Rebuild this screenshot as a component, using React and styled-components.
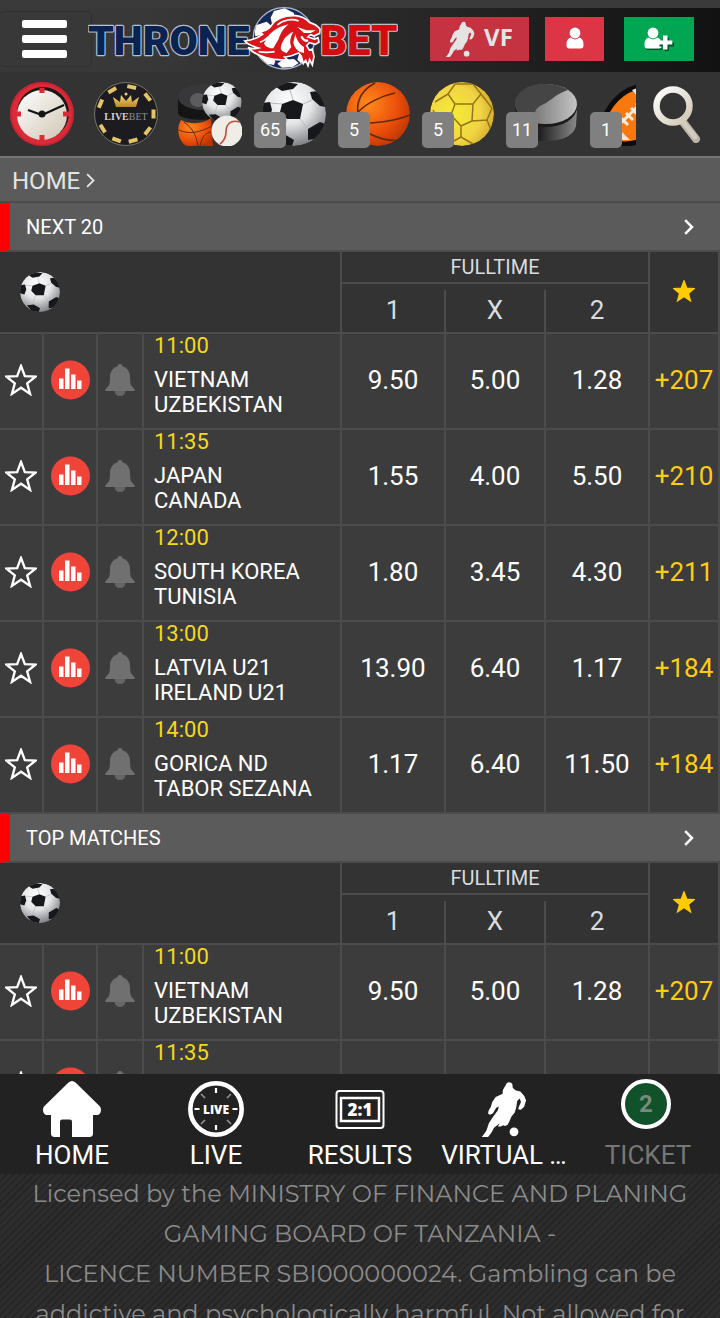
import React from "react";
import styled, { createGlobalStyle, css } from "styled-components";

const GlobalStyle = createGlobalStyle`
  *, *::before, *::after { box-sizing: border-box; }
  body {
    margin: 0;
    background: #333;
    color: #fff;
    font-family: Roboto, "Liberation Sans", sans-serif;
  }
  button { font: inherit; color: inherit; background: none; border: 0; padding: 0; cursor: pointer; }
  a { color: inherit; text-decoration: none; }
  svg { display: block; }
`;

const Page = styled.div`
  display: flex;
  flex-direction: column;
  height: 100vh;
  overflow: hidden;
`;

/* ---------- top bar ---------- */

const TopBar = styled.header`
  display: flex;
  align-items: center;
  height: 72px;
  flex: none;
  padding: 6px 26px 0 0;
  background:
    linear-gradient(#3a3a3a, #3a3a3a) top / 100% 8px no-repeat,
    linear-gradient(90deg, #383838 20%, #262626 60%, #121212 100%);
`;

const MenuButton = styled.button`
  display: flex;
  flex-direction: column;
  justify-content: center;
  gap: 7px;
  width: 92px;
  height: 56px;
  padding-left: 22px;
  margin-right: -4px;
  border: 1px solid #303030;
  border-left: 0;
  border-radius: 5px;
`;

const MenuBar = styled.span`
  width: 45px;
  height: 8px;
  border-radius: 2px;
  background: #fff;
`;

const LogoLink = styled.a`
  flex: none;
`;

const Actions = styled.div`
  display: flex;
  align-items: center;
  margin-left: auto;
`;

const ActionButton = styled.button`
  display: flex;
  align-items: center;
  justify-content: center;
  gap: 9px;
  width: ${(p) => p.$width}px;
  height: 44px;
  margin-left: ${(p) => p.$gap || 0}px;
  background: ${(p) => p.$color};
  color: #fff;
  opacity: ${(p) => (p.$dim ? 0.88 : 1)};
`;

const ActionLabel = styled.span`
  height: 36px;
  font-size: 24px;
  line-height: 32px;
  font-weight: 700;
  font-family: "Open Sans", "Noto Sans", sans-serif;
`;

/* ---------- sports strip ---------- */

const SportsBar = styled.nav`
  display: flex;
  flex: none;
  height: 84px;
  background: #333;
`;

const SportsList = styled.div`
  display: flex;
  flex: 1;
  min-width: 0;
  overflow: hidden;
`;

const SportLink = styled.a`
  position: relative;
  flex: none;
  width: 84px;
  height: 84px;
  padding: 10px;
`;

const Badge = styled.span`
  position: absolute;
  left: 2px;
  top: 40px;
  width: 32px;
  height: 36px;
  border-radius: 5px;
  background: #808080;
  font-size: 18px;
  line-height: 36px;
  text-align: center;
`;

const SearchButton = styled.button`
  flex: none;
  width: 84px;
  display: flex;
  align-items: center;
  justify-content: center;
`;

/* ---------- content ---------- */

const Content = styled.main`
  flex: 1;
  min-height: 0;
  overflow-y: auto;
  scrollbar-width: none;
  background: #3c3c3c;
`;

const Breadcrumb = styled.nav`
  display: flex;
  align-items: center;
  gap: 6px;
  height: 47px;
  padding: 2px 12px 0;
  border-top: 2px solid #747474;
  border-bottom: 2px solid #4c4c4c;
  background: #5b5b5b;
  color: #e4e4e4;
  font-size: 24px;
`;

const SectionHeader = styled.button`
  display: flex;
  align-items: center;
  justify-content: space-between;
  width: 100%;
  height: 49px;
  padding: 0 26px 0 16px;
  border-left: 10px solid #f00;
  border-bottom: 2px solid #4c4c4c;
  background: #5b5b5b;
`;

const SectionTitle = styled.span`
  font-size: 20px;
  line-height: 24px;
`;

const MatchTable = styled.table`
  width: 100%;
  table-layout: fixed;
  border-collapse: separate;
  border-spacing: 0;
`;

const line = css`
  border-right: 2px solid #4c4c4c;
  border-bottom: 2px solid #4c4c4c;
`;

const HeadCell = styled.th`
  ${line}
  padding: 0;
  background: #333;
  color: #d9dcdf;
  font-weight: 400;
  font-size: 20px;
  line-height: 24px;
  height: ${(p) => p.$height}px;
`;

const HeadIcon = styled.span`
  display: flex;
  justify-content: ${(p) => (p.$start ? "flex-start" : "center")};
  padding-left: ${(p) => (p.$start ? 20 : 0)}px;
  padding-bottom: ${(p) => (p.$start ? 0 : 2)}px;
`;

const OutcomeCell = styled.th`
  padding: 6px 0 0;
  height: 50px;
  background: #333;
  border-bottom: 2px solid #4c4c4c;
  border-right: ${(p) => (p.$last ? "2px solid #4c4c4c" : "0")};
  color: #d9dcdf;
  font-weight: 400;
`;

const OutcomeLabel = styled.span`
  display: block;
  height: 42px;
  border-right: ${(p) => (p.$last ? "0" : "2px solid #4c4c4c")};
  font-size: 26px;
  line-height: 40px;
`;

const Cell = styled.td`
  ${line}
  height: 96px;
  padding: 0;
  text-align: center;
`;

const TeamsCell = styled(Cell)`
  padding: 0 0 0 10px;
  text-align: left;
  vertical-align: top;
`;

const Kickoff = styled.div`
  margin-bottom: 9px;
  font-size: 22px;
  line-height: 24px;
  color: #f5d81c;
`;

const Team = styled.div`
  font-size: 22px;
  line-height: 25px;
  white-space: nowrap;
`;

const IconButton = styled.button`
  display: flex;
  align-items: center;
  justify-content: center;
  width: 100%;
  height: 94px;
  padding-bottom: 2px;
`;

const OddButton = styled.button`
  width: 100%;
  height: 94px;
  padding-bottom: 2px;
  font-size: 26px;
  color: ${(p) => (p.$more ? "#ffcc11" : "#fff")};
`;

/* ---------- bottom navigation ---------- */

const BottomNav = styled.nav`
  display: grid;
  grid-template-columns: repeat(5, 1fr);
  flex: none;
  height: 100px;
  background: #222;
`;

const NavLink = styled.a`
  display: flex;
  flex-direction: column;
  align-items: center;
  gap: 2px;
  padding-top: 7px;
  color: ${(p) => (p.$muted ? "#777" : "#fff")};
`;

const NavIcon = styled.span`
  display: flex;
  align-items: center;
  justify-content: center;
  height: 56px;
`;

const NavLabel = styled.span`
  font-size: 26px;
  line-height: 32px;
  white-space: nowrap;
`;

const TicketCount = styled.span`
  width: 50px;
  height: 50px;
  margin: 0 4px 10px 0;
  border: 4px solid #fff;
  border-radius: 50%;
  background: #11522b;
  color: #788a7f;
  font-size: 24px;
  font-weight: 700;
  line-height: 42px;
  text-align: center;
`;

const Footer = styled.footer`
  flex: none;
  height: 144px;
  overflow: hidden;
  background: repeating-linear-gradient(-45deg, #252525 0 2px, #2d2d2d 2px 5px);
  color: #8b8b8b;
  font-family: Montserrat, Inter, sans-serif;
  font-size: 24px;
  line-height: 40px;
  text-align: center;
`;

const FooterLine = styled.p`
  margin: 0;
  white-space: nowrap;
`;

/* ---------- drawings ---------- */

function Chevron({ size = 16, weight = 2.5 }) {
  return (
    <svg width={size * 0.625} height={size} viewBox="0 0 10 16" fill="none" stroke="currentColor" strokeWidth={weight} aria-hidden="true">
      <path d="M1.2 1.2 8 8l-6.800 6.800" />
    </svg>
  );
}

function Logo() {
  const word = {
    fontFamily: "Roboto, sans-serif",
    fontWeight: 900,
    stroke: "#b9bfcc",
    strokeWidth: 2.4,
    paintOrder: "stroke",
    strokeLinejoin: "bevel",
  };
  return (
    <svg width="310" height="64" viewBox="0 0 310 64" role="img" aria-label="Thronebet">
      <text x="0" y="48" fontSize="41" fill="#0a2350" {...word}>THRONE</text>
      <text x="232" y="48" fontSize="42" fill="#d40c10" {...word}>BET</text>
      <g transform="translate(152 -4) scale(.3333)">
        <circle cx="132" cy="106" r="92" fill="#14295a" stroke="#aeb9cf" strokeWidth="4" />
        <path d="M92 44l10-20 32-8 28 14 4 24-70 8z" fill="#fff" />
        <path d="M50 66l30-10 14 12-8 24-40 8-2-14z" fill="#fff" />
        <path d="M58 150l30 8 18 16-4 12-20-4-22-20z" fill="#fff" />
        <path d="M112 182l16-12 34-2 14 12-18 12-32 2z" fill="#fff" />
        <path d="M176 156l12 0 4 20-10 4-10-10z" fill="#fff" />
        <path
          d="M14 114C40 112 54 104 68 94L62 86C78 84 88 78 94 68C104 50 130 36 166 38C184 40 198 46 208 58C222 62 234 70 240 78L239 91L222 99L212 95L204 102L224 108L234 104L237 117L226 124L208 119L200 128L208 141L217 138L222 160L217 186L209 170L204 188L197 172L190 182L184 160L176 150C160 156 150 162 134 162L142 170C100 174 50 162 24 134C36 138 46 138 56 135C38 130 22 124 14 114Z"
          fill="#d8161c"
          stroke="#fff"
          strokeWidth="5"
        />
        <path
          d="M72 122C82 94 108 72 146 64C130 76 122 90 116 108L100 136C88 136 78 132 72 122ZM122 136C126 112 138 96 160 86C150 104 148 118 154 132L140 150C130 148 124 144 122 136ZM172 72L200 82L228 82L212 90L192 90ZM166 94C170 112 180 126 192 132L192 150C174 148 162 134 160 118Z"
          fill="#fff"
        />
        <path d="M112 66C130 50 156 46 176 54M60 118C72 114 78 108 84 102M56 146C76 150 92 148 104 146" stroke="#fff" strokeWidth="5" fill="none" />
        <path d="M184 100C190 112 196 116 204 112" stroke="#fff" strokeWidth="7" fill="none" />
      </g>
    </svg>
  );
}

function PlayerIcon({ width, height }) {
  return (
    <svg width={width} height={height} viewBox="18 10 142 176" fill="currentColor" aria-hidden="true">
      <path d="M96 17c5-5 15-4 18 4l1 10 8 8 16 4 13 15 5 13-6 20-10 9-9-1 3-10 6-13-4-11-8 8-3 20-5 17-10 12-6 14-6 12-8 4-6-3-8 4-9 0 6-10-18 14-8 15-12 16-8 6-17 0 13-16 8-12 8-24 12-18 16-22 3-12-8 4-11 18-9 4-6-4 2-9 7-12 4-14 11-17 14-6 8-4 1-12z" />
      <circle cx="119" cy="170" r="14" />
    </svg>
  );
}

function UserIcon({ plus }) {
  return (
    <svg width={plus ? 30 : 18} height="24" viewBox={plus ? "0 0 30 24" : "0 0 18 24"} fill="#fff" aria-hidden="true">
      {plus && <path d="M2 21.500h16.500v1.500H3z" fill="#06502a" />}
      <path d="M4.500 10.600a6.500 6.500 0 0 0 9 0c2.700.8 4 3.300 4 6.700v1.200c0 2-.9 3-2.800 3H3.300c-1.900 0-2.800-1-2.800-3v-1.200c0-3.400 1.300-5.900 4-6.700z" />
      <circle cx="9" cy="6" r="5.400" />
      {plus && (
        <>
          <path d="M20.500 10.500h4.500v5h5v4h-5v5h-4.500v-5h-5v-4h5z" fill="#06502a" />
          <path d="M19 8.500h4.500v5h4.800v4h-4.800v5H19v-5h-4.800v-4H19z" />
        </>
      )}
    </svg>
  );
}

const HiddenDefs = styled.svg`
  position: absolute;
  width: 0;
  height: 0;
`;

function BallShading() {
  return (
    <HiddenDefs aria-hidden="true">
      <defs>
        <radialGradient id="whiteBall" cx=".42" cy=".3" r=".72">
          <stop offset="0" stopColor="#fff" />
          <stop offset=".5" stopColor="#e4e5e7" />
          <stop offset="1" stopColor="#7c7e82" />
        </radialGradient>
        <radialGradient id="orangeBall" cx=".35" cy=".35" r=".75">
          <stop offset="0" stopColor="#ff8a1c" />
          <stop offset=".6" stopColor="#ec500b" />
          <stop offset="1" stopColor="#b93202" />
        </radialGradient>
        <radialGradient id="yellowBall" cx=".35" cy=".5" r=".75">
          <stop offset="0" stopColor="#f7ec35" />
          <stop offset=".6" stopColor="#f0d445" />
          <stop offset="1" stopColor="#c99a24" />
        </radialGradient>
        <linearGradient id="puckTop" x1="0" x2="1">
          <stop offset="0" stopColor="#555" />
          <stop offset=".5" stopColor="#8f8f8f" />
          <stop offset="1" stopColor="#c4c4c4" />
        </linearGradient>
        <linearGradient id="puckSide" x1="0" x2="1">
          <stop offset="0" stopColor="#111" />
          <stop offset=".4" stopColor="#222" />
          <stop offset="1" stopColor="#8a8a8a" />
        </linearGradient>
        <linearGradient id="cream" x1="0" y1="0" x2="1" y2="1">
          <stop offset="0" stopColor="#fff" />
          <stop offset="1" stopColor="#cfc6b4" />
        </linearGradient>
        <linearGradient id="gold" x1="0" y1="0" x2="0" y2="1">
          <stop offset="0" stopColor="#f7dc82" />
          <stop offset="1" stopColor="#b98420" />
        </linearGradient>
        <clipPath id="ballEdge"><circle cx="32" cy="32" r="32" /></clipPath>
      </defs>
    </HiddenDefs>
  );
}

const SoccerArt = () => (
  <g clipPath="url(#ballEdge)">
    <circle cx="32" cy="32" r="32" fill="url(#whiteBall)" />
    <path
      d="M20 22 8 21M31 18l-3-10M41 22l9-4M38 37l9 11M25 37l-5 15"
      fill="none"
      stroke="#b7b9bd"
      strokeWidth="1"
    />
    <g fill="#17181b">
      <path d="M20 22l11-4 10 4-3 15H25l-7-7z" />
      <path d="M14 5l9-5 13 2-5 5-11 2z" />
      <path d="M48 10l8-1 6 8 2 8-6-1-8-7z" />
      <path d="M0 21l8-1 2 8-3 8-7-2z" />
      <path d="M46 47l12-7 5 2-5 14-12 2z" />
      <path d="M11 53l11-1 10 6-2 6-10-1z" />
    </g>
  </g>
);

const BasketArt = () => (
  <g clipPath="url(#ballEdge)">
    <circle cx="32" cy="32" r="32" fill="url(#orangeBall)" />
    <g fill="none" stroke="#5f2a0b" strokeWidth="1.600">
      <path d="M0 38c10 5 42 4 64-5M12 30C20 22 34 14 49 11M12 32C10 18 16 8 29 1M20 50c12 6 22 10 36 8M4 44c6 4 10 4 16 7" />
    </g>
  </g>
);

const HandballArt = () => (
  <g clipPath="url(#ballEdge)">
    <circle cx="32" cy="32" r="32" fill="url(#yellowBall)" />
    <g fill="none" stroke="#957612" strokeWidth="1.500">
      <path d="M18 12l7-10h18l8 10-8 10H25zM25 22l-4 11 10 11 11-5 1-17M18 12 5 20M51 12l11 14-5 12-15 1M57 38l4 10-7 10M21 33 8 37 3 28M8 37l4 14 12 8 7-4V44M31 55l12 7M12 51l-5 1" />
    </g>
  </g>
);

const PuckArt = () => (
  <g>
    <path d="M2 26v19c3 9 16 14 30 14 17 0 28-6 30-15l1-16z" fill="url(#puckSide)" />
    <ellipse cx="32" cy="25" rx="31" ry="20" fill="#1b1b1b" />
    <ellipse cx="32" cy="22" rx="31" ry="20" fill="url(#puckTop)" />
    <path d="M1 22C2 10 14 2 32 2c9 0 18 3 22 6-14 5-16 10-24 14-10 4-10 10-11 17C8 36 1 29 1 22z" fill="#454545" />
  </g>
);

const RugbyArt = () => (
  <g>
    <path d="M4 54C2 34 18 8 44 4c20 2 24 30 10 46-12 14-36 16-50 4z" fill="#f8780f" stroke="#0c0c0c" strokeWidth="5" />
    <path d="M34 8l10-4 8 12-8 4zM22 48l10 10-16 0z" fill="#e9e4dd" />
    <path d="M22 42 44 20M23 36l7 7M28 31l7 7M33 26l7 7M38 21l7 7" stroke="#f6eadb" strokeWidth="3" fill="none" />
  </g>
);

const ClockArt = () => (
  <g>
    <circle cx="32" cy="32" r="32" fill="#dc2a38" />
    <circle cx="32" cy="32" r="31" fill="none" stroke="#b91d2b" strokeWidth="2" opacity=".5" />
    <circle cx="33" cy="31" r="26" fill="#1d1617" />
    <circle cx="32" cy="33" r="25" fill="url(#cream)" />
    <path d="M32 6v5M32 53v6M6 32h5M53 32h6" stroke="#dc2a38" strokeWidth="5" />
    <path d="M18 28l14 5 22-10" fill="none" stroke="#151515" strokeWidth="2.200" />
    <circle cx="32" cy="32" r="3.500" fill="#151515" />
  </g>
);

const ChipArt = () => (
  <g>
    <circle cx="32" cy="32" r="31.500" fill="#1c1b1f" stroke="#77736a" strokeWidth="1" />
    {[12, 52, 90, 128, 165, 200, 238, 292, 330].map((a) => (
      <rect key={a} x="27.500" y="2.500" width="9" height="4" fill="#e4c566" transform={`rotate(${a} 32 32)`} />
    ))}
    <path d="M22 25 19 15l7 5 1-7 5 6 5-6 1 7 7-5-3 10z" fill="url(#gold)" />
    <circle cx="32" cy="12" r="1.500" fill="#f0cf6d" />
    <text x="32" y="38" textAnchor="middle" fontFamily="'Liberation Serif', serif" fontSize="10" fill="#d2d2d4">
      <tspan fontWeight="700">LIVE</tspan><tspan fill="#8d8d90">BET</tspan>
    </text>
  </g>
);

const AllSportsArt = () => (
  <g>
    <path d="M0 14v17c2 9 44 9 50 0V14z" fill="#141414" />
    <ellipse cx="25" cy="15" rx="25" ry="13" fill="#38383a" />
    <ellipse cx="20" cy="18" rx="8" ry="7" fill="#5c5c5e" />
    <path d="M3 38c10 5 22 4 30-2l2 28H9C0 60-2 46 3 38z" fill="url(#orangeBall)" />
    <path d="M1 48c10 5 22 2 33-4M6 40c8 6 12 12 14 24M34 50c-6 0-10 4-12 14" fill="none" stroke="#6a2c0b" />
    <g transform="translate(24 0) scale(.62)"><SoccerArt /></g>
    <circle cx="49" cy="49" r="15.500" fill="#f0ece6" />
    <path d="M62 40c-10-3-14 3-14 10 0 6-2 9-6 12" fill="none" stroke="#c44a40" strokeWidth="1.600" />
  </g>
);

const ART = {
  clock: ClockArt,
  chip: ChipArt,
  all: AllSportsArt,
  soccer: SoccerArt,
  basket: BasketArt,
  handball: HandballArt,
  puck: PuckArt,
  rugby: RugbyArt,
};

function SportIcon({ kind, size = 64 }) {
  const Art = ART[kind];
  return (
    <svg width={size} height={size} viewBox="0 0 64 64" aria-hidden="true">
      <Art />
    </svg>
  );
}

const SearchIcon = () => (
  <svg width="52" height="58" viewBox="0 0 52 58" fill="none" aria-hidden="true">
    <path d="M31 37l13 17" stroke="#b8b1a4" strokeWidth="8" strokeLinecap="round" />
    <path d="M31 37l12 15" stroke="#d3ccc0" strokeWidth="5" strokeLinecap="round" />
    <circle cx="21" cy="21" r="16.500" stroke="url(#cream)" strokeWidth="6.500" />
  </svg>
);

const STAR = "15 1.800 18.600 11.400 28.600 11.800 20.800 18.100 23.500 28 15 22.300 6.500 28 9.200 18.100 1.400 11.800 11.400 11.400";

const Star = ({ size, filled }) => (
  <svg width={size} height={size} viewBox="0 0 30 30" aria-hidden="true">
    <polygon points={STAR} fill={filled ? "#ffcc00" : "none"} stroke={filled ? "#ffcc00" : "#fff"} strokeWidth="2.200" />
  </svg>
);

const StatsIcon = () => (
  <svg width="40" height="40" viewBox="0 0 40 40" aria-hidden="true">
    <circle cx="20.500" cy="20" r="19.500" fill="#f04438" />
    <path d="M9 18.500h4.500V29H9zM15 8.500h4.500V29H15zM21 14.500h4.500V29H21zM27 20.500h4.500V29H27z" fill="#fff" />
  </svg>
);

const BellIcon = () => (
  <svg width="30" height="34" viewBox="0 0 30 34" fill="#707070" aria-hidden="true">
    <path d="M15 1c1.500 0 2.300.8 2.500 2.200C23 5 25 9.500 25 14c0 6 .6 9 4.500 12v2H.5v-2C4.400 23 5 20 5 14c0-4.500 2-9 7.500-10.800C12.700 1.800 13.500 1 15 1z" />
    <path d="M9.500 28h11c-.5 3.300-2.500 5-5.500 5s-5-1.700-5.500-5z" fill="#666" />
  </svg>
);

const HomeIcon = () => (
  <svg width="58" height="56" viewBox="0 0 58 56" fill="#fff" aria-hidden="true">
    <path d="M25.500 1.500c2.200-2 4.800-2 7 0L56.500 25c2.800 3 1.500 9-3 9H50v18.500c0 2.300-1 3.500-3.500 3.500H29V41c0-1.700-.7-2.500-2.500-2.500h-7c-1.600 0-2.500.8-2.500 2.500v15h-5.500C9.200 56 8 54.800 8 52.500V34H4.500c-4.500 0-5.800-6-3-9z" />
  </svg>
);

const LiveIcon = () => (
  <svg width="56" height="56" viewBox="0 0 56 56" aria-hidden="true">
    <circle cx="28" cy="28" r="25.700" fill="none" stroke="#fff" strokeWidth="4.600" />
    <path d="M28 7v5M28 44v5M6.500 28h5M44.500 28h5" stroke="#fff" strokeWidth="2.200" />
    <path d="M13 13l4 4M43 13l-4 4M13 43l4-4M43 43l-4-4" stroke="#999" strokeWidth="1.500" />
    <text x="28" y="32.500" textAnchor="middle" fontFamily="'Open Sans', sans-serif" fontWeight="800" fontSize="12" fill="#fff">LIVE</text>
  </svg>
);

const ResultsIcon = () => (
  <svg width="50" height="40" viewBox="0 0 50 40" fill="none" stroke="#fff" strokeWidth="2" aria-hidden="true">
    <rect x="1.500" y="2" width="47" height="37" rx="3" />
    <rect x="6" y="9" width="38" height="23" strokeWidth="2.500" />
    <text x="25" y="26.500" textAnchor="middle" fontFamily="'Open Sans', sans-serif" fontWeight="800" fontSize="17" fill="#fff" stroke="none">2:1</text>
  </svg>
);

/* ---------- data ---------- */

const SPORTS = [
  { kind: "clock", name: "Upcoming" },
  { kind: "chip", name: "Live bet" },
  { kind: "all", name: "All sports" },
  { kind: "soccer", name: "Football", count: 65 },
  { kind: "basket", name: "Basketball", count: 5 },
  { kind: "handball", name: "Handball", count: 5 },
  { kind: "puck", name: "Ice hockey", count: 11 },
  { kind: "rugby", name: "American football", count: 1 },
];

const MATCHES = [
  { time: "11:00", home: "VIETNAM", away: "UZBEKISTAN", odds: ["9.50", "5.00", "1.28"], more: "+207" },
  { time: "11:35", home: "JAPAN", away: "CANADA", odds: ["1.55", "4.00", "5.50"], more: "+210" },
  { time: "12:00", home: "SOUTH KOREA", away: "TUNISIA", odds: ["1.80", "3.45", "4.30"], more: "+211" },
  { time: "13:00", home: "LATVIA U21", away: "IRELAND U21", odds: ["13.90", "6.40", "1.17"], more: "+184" },
  { time: "14:00", home: "GORICA ND", away: "TABOR SEZANA", odds: ["1.17", "6.40", "11.50"], more: "+184" },
];

const COLUMNS = [44, 54, 46, undefined, 104, 100, 104, 70];

function MatchRow({ match }) {
  return (
    <tr>
      <Cell><IconButton aria-label="Add to favourites"><Star size={32} /></IconButton></Cell>
      <Cell><IconButton aria-label="Statistics"><StatsIcon /></IconButton></Cell>
      <Cell><IconButton aria-label="Notify me"><BellIcon /></IconButton></Cell>
      <TeamsCell>
        <Kickoff>{match.time}</Kickoff>
        <Team>{match.home}</Team>
        <Team>{match.away}</Team>
      </TeamsCell>
      {match.odds.map((odd, i) => (
        <Cell key={i}><OddButton>{odd}</OddButton></Cell>
      ))}
      <Cell><OddButton $more>{match.more}</OddButton></Cell>
    </tr>
  );
}

function MatchSection({ title, matches }) {
  return (
    <section>
      <SectionHeader>
        <SectionTitle>{title}</SectionTitle>
        <Chevron size={16} />
      </SectionHeader>
      <MatchTable>
        <colgroup>
          {COLUMNS.map((width, i) => <col key={i} width={width} />)}
        </colgroup>
        <thead>
          <tr>
            <HeadCell colSpan={4} rowSpan={2}>
              <HeadIcon $start><SportIcon kind="soccer" size={40} /></HeadIcon>
            </HeadCell>
            <HeadCell colSpan={3} $height={32}>FULLTIME</HeadCell>
            <HeadCell rowSpan={2}>
              <HeadIcon><Star size={22} filled /></HeadIcon>
            </HeadCell>
          </tr>
          <tr>
            {["1", "X", "2"].map((label) => (
              <OutcomeCell key={label} $last={label === "2"}>
                <OutcomeLabel $last={label === "2"}>{label}</OutcomeLabel>
              </OutcomeCell>
            ))}
          </tr>
        </thead>
        <tbody>
          {matches.map((m) => <MatchRow key={m.time} match={m} />)}
        </tbody>
      </MatchTable>
    </section>
  );
}

export default function App() {
  return (
    <Page>
      <GlobalStyle />
      <BallShading />
      <TopBar>
        <MenuButton aria-label="Menu"><MenuBar /><MenuBar /><MenuBar /></MenuButton>
        <LogoLink href="#home"><Logo /></LogoLink>
        <Actions>
          <ActionButton $width={99} $color="#dc3545" $dim>
            <PlayerIcon width={29} height={36} />
            <ActionLabel>VF</ActionLabel>
          </ActionButton>
          <ActionButton $width={59} $gap={16} $color="#dc3545" aria-label="Log in"><UserIcon /></ActionButton>
          <ActionButton $width={70} $gap={20} $color="#00a651" aria-label="Register"><UserIcon plus /></ActionButton>
        </Actions>
      </TopBar>
      <SportsBar>
        <SportsList>
          {SPORTS.map((s) => (
            <SportLink key={s.kind} href={"#" + s.kind} aria-label={s.name}>
              <SportIcon kind={s.kind} />
              {s.count && <Badge>{s.count}</Badge>}
            </SportLink>
          ))}
        </SportsList>
        <SearchButton aria-label="Search"><SearchIcon /></SearchButton>
      </SportsBar>
      <Content>
        <Breadcrumb>
          <a href="#home">HOME</a>
          <Chevron size={15} weight={2} />
        </Breadcrumb>
        <MatchSection title="NEXT 20" matches={MATCHES} />
        <MatchSection title="TOP MATCHES" matches={MATCHES.slice(0, 2)} />
      </Content>
      <BottomNav>
        <NavLink href="#home"><NavIcon><HomeIcon /></NavIcon><NavLabel>HOME</NavLabel></NavLink>
        <NavLink href="#live"><NavIcon><LiveIcon /></NavIcon><NavLabel>LIVE</NavLabel></NavLink>
        <NavLink href="#results"><NavIcon><ResultsIcon /></NavIcon><NavLabel>RESULTS</NavLabel></NavLink>
        <NavLink href="#virtual"><NavIcon><PlayerIcon width={45} height={56} /></NavIcon><NavLabel>VIRTUAL …</NavLabel></NavLink>
        <NavLink href="#ticket" $muted><NavIcon><TicketCount>2</TicketCount></NavIcon><NavLabel>TICKET</NavLabel></NavLink>
      </BottomNav>
      <Footer>
        <FooterLine>Licensed by the MINISTRY OF FINANCE AND PLANING</FooterLine>
        <FooterLine>GAMING BOARD OF TANZANIA -</FooterLine>
        <FooterLine>LICENCE NUMBER SBI000000024. Gambling can be</FooterLine>
        <FooterLine>addictive and psychologically harmful. Not allowed for</FooterLine>
      </Footer>
    </Page>
  );
}
